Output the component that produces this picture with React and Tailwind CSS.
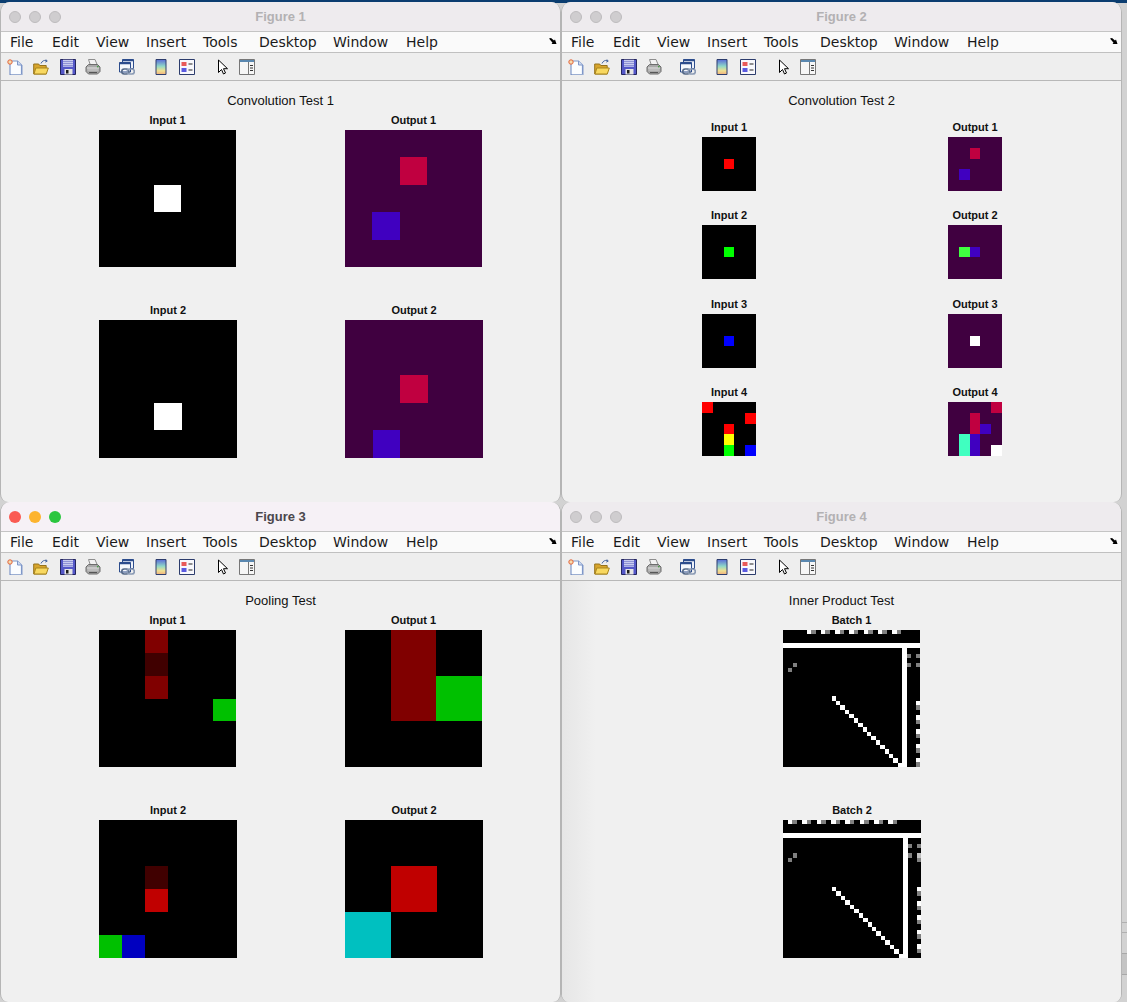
const menus = [
  ['File', 'w-[42px]'], ['Edit', 'w-[44px]'], ['View', 'w-[50px]'], ['Insert', 'w-[57px]'],
  ['Tools', 'w-[56px]'], ['Desktop', 'w-[74px]'], ['Window', 'w-[73px]'], ['Help', 'w-[40px]'],
];

const P = '#400040';
const CR = '#c00040';
const BL = '#4000c0';

// cells are [col, row, colour]
function Img({ n, bg = '#000', cells = [] }) {
  return (
    <svg viewBox={`0 0 ${n} ${n}`} className="block w-full h-full" preserveAspectRatio="none">
      <rect width={n} height={n} fill={bg} />
      {cells.map(([x, y, c, w = 1, h = 1], i) => (
        <rect key={i} x={x} y={y} width={w} height={h} fill={c} shapeRendering="crispEdges" />
      ))}
    </svg>
  );
}

function Axes({ title, size, ...img }) {
  return (
    <div style={{ width: size }}>
      <div className="h-[14px] mb-[3px] text-[11px] leading-[14px] font-bold text-center text-[#111] whitespace-nowrap">{title}</div>
      <div style={{ width: size, height: size }}><Img {...img} /></div>
    </div>
  );
}

function ToolIcons() {
  return (
    <>
      {/* new */}
      <svg width="16" height="16" viewBox="0 0 16 16" className="ml-[6px]">
        <path d="M3 2h7.500l4 4v9.500H3z" fill="#fbfdff" stroke="#7f97c8" strokeWidth="1.200" />
        <path d="M10.500 2v4h4" fill="#cfdcf2" stroke="#7f97c8" />
        <path d="M15.500 6v10H4" fill="none" stroke="#b8c4dc" />
        <circle cx="3" cy="3" r="2.200" fill="#f5dcb0" stroke="#e2643a" />
      </svg>
      {/* open */}
      <svg width="16" height="16" viewBox="0 0 16 16" className="ml-[10px]">
        <path d="M.7 5h5l1 1.500h6.500v8.500H.7z" fill="#d8a52c" stroke="#94721c" />
        <path d="M1 15l1.800-6h12.500l-2 6z" fill="#f8d860" stroke="#a8851f" />
        <path d="M8 4.500c1-2.500 3-3.500 5.500-3M13 .5l1.200 1.700-2 .9" fill="none" stroke="#4a68a0" />
      </svg>
      {/* save */}
      <svg width="16" height="16" viewBox="0 0 16 16" className="ml-[11px]">
        <path d="M.5 .5h15v15H.5z" fill="#5457c8" stroke="#23255f" />
        <path d="M3 .8h10v7H3z" fill="#c9ccf0" />
        <path d="M3 2.500h10M3 4.500h10M3 6.500h10" stroke="#8f93d6" />
        <path d="M4.500 10h8v5.500h-8z" fill="#e6e6e6" />
        <path d="M6 11h2.500v3.500H6z" fill="#1c1c1c" />
      </svg>
      {/* print */}
      <svg width="16" height="16" viewBox="0 0 16 16" className="ml-[9px]">
        <path d="M3.500 .5h6.500l2.500 6H5.500z" fill="#f2f2f2" stroke="#8e8e8e" />
        <path d="M1 8l2.500-2.500h9L15 8v4.500L12.500 15h-9L1 12.500z" fill="#a8a8a8" stroke="#6c6c6c" />
        <path d="M2 9h12" stroke="#e8e8e8" />
        <path d="M2.500 11h11" stroke="#cfcfcf" />
        <path d="M4 13.500h8" stroke="#555" />
        <circle cx="12.800" cy="7.600" r=".9" fill="#4a9a4a" />
      </svg>
      {/* link */}
      <svg width="16" height="16" viewBox="0 0 16 16" className="ml-[18px]">
        <path d="M3.500 .5h11v9h-11z" fill="#eef2fa" stroke="#2c4c8c" />
        <path d="M3.500 .5h11v1.800h-11z" fill="#2c4c8c" />
        <path d="M.5 3.500h11v9.500H.5z" fill="#f6f8fc" stroke="#2c4c8c" />
        <path d="M.5 3.500h11v1.800H.5z" fill="#2c4c8c" />
        <rect x="2.800" y="10" width="7" height="5" rx="2.400" fill="none" stroke="#566a88" strokeWidth="1.600" />
        <rect x="8.300" y="10" width="7" height="5" rx="2.400" fill="none" stroke="#8a9ab4" strokeWidth="1.600" />
      </svg>
      {/* colorbar */}
      <svg width="16" height="16" viewBox="0 0 16 16" className="ml-[18px]">
        <defs>
          <linearGradient id="cb" x1="0" y1="0" x2="0" y2="1">
            <stop offset="0" stopColor="#5a6ad8" />
            <stop offset=".45" stopColor="#8fd8c8" />
            <stop offset=".75" stopColor="#f0e090" />
            <stop offset="1" stopColor="#f0b080" />
          </linearGradient>
        </defs>
        <path d="M3 .5h10v15H3z" fill="url(#cb)" stroke="#2c3c6c" />
      </svg>
      {/* legend */}
      <svg width="16" height="16" viewBox="0 0 16 16" className="ml-[10px]">
        <path d="M.5 .5h15v15H.5z" fill="#f8f8fc" stroke="#2c3c6c" />
        <path d="M2.500 3h5v4h-5z" fill="#e85a5a" />
        <path d="M2.500 9h5v4h-5z" fill="#5a5ae0" />
        <path d="M9.500 5h4M9.500 11h4" stroke="#222" />
      </svg>
      {/* cursor */}
      <svg width="16" height="16" viewBox="0 0 16 16" className="ml-[20px]">
        <path d="M3.500 1v12.500l3-3 2 4.500 2-1-2-4.300h4z" fill="#fff" stroke="#000" />
      </svg>
      {/* plot browser */}
      <svg width="16" height="16" viewBox="0 0 16 16" className="ml-[8px]">
        <path d="M.5 .5h15v15H.5z" fill="#f6f6f6" stroke="#777" />
        <path d="M1 1h14v2H1z" fill="#5a88b0" />
        <path d="M9.500 3v12" stroke="#777" />
        <path d="M11 6.500h3M11 9h3M11 11.500h3" stroke="#333" />
      </svg>
    </>
  );
}

function Figure({ n, title, heading, active, className, plots, grid }) {
  return (
    <div className={`absolute w-[561px] h-[500px] rounded-t-[10px] rounded-b-[8px] overflow-hidden border-l border-r border-[#b5b5b5] flex flex-col bg-[#f0f0f0] ${className}`}>
      <div className={`h-[30px] shrink-0 flex items-center relative border-b border-[#c4c4c4] ${active ? 'bg-[#f6f1f6]' : 'bg-[#eeebee]'}`}>
        <div className="flex gap-2 pl-[8px]">
          <span className={`w-3 h-3 rounded-full ${active ? 'bg-[#fa5a52]' : 'bg-[#cfcdcf] border border-[#bdbbbd]'}`} />
          <span className={`w-3 h-3 rounded-full ${active ? 'bg-[#fdb42e]' : 'bg-[#cfcdcf] border border-[#bdbbbd]'}`} />
          <span className={`w-3 h-3 rounded-full ${active ? 'bg-[#2bc63f]' : 'bg-[#cfcdcf] border border-[#bdbbbd]'}`} />
        </div>
        <div className={`absolute inset-x-0 text-center text-[13px] font-bold ${active ? 'text-[#4b474c]' : 'text-[#b3b1b3]'}`}>{title}</div>
      </div>
      <div className="h-[21px] shrink-0 flex items-center pl-[9px] bg-[#fafafa] border-b border-[#c0c0c0] font-['DejaVu_Sans',sans-serif] text-[14px] text-[#1a1a1a] relative">
        {menus.map(([m, w]) => <span key={m} className={w}>{m}</span>)}
        <svg width="8" height="7" viewBox="0 0 8 7" className="absolute left-[548px] top-[6px]">
          <path d="M0 .5l2-.5 3 2.500L6 1.500 7.500 6H2.500l1-1.200z" fill="#000" />
        </svg>
      </div>
      <div className="h-[28px] shrink-0 flex items-center bg-[#eeeeee] border-b border-[#b8b8b8]">
        <ToolIcons />
      </div>
      <div className={`flex-1 pt-[12px] ${n === 4 ? 'bg-gradient-to-r from-[#e6e6e6] to-[#f0f0f0] to-[6%]' : ''}`}>
        <div className="h-[16px] mb-[4px] text-[13px] leading-[16px] text-center text-[#111]">{heading}</div>
        <div className={grid}>
          {plots.map((p) => <Axes key={p.title} {...p} />)}
        </div>
      </div>
    </div>
  );
}

const fig1 = [
  { title: 'Input 1', size: 137, n: 5, cells: [[2, 2, '#fff']] },
  { title: 'Output 1', size: 137, n: 5, bg: P, cells: [[2, 1, CR], [1, 3, BL]] },
  { title: 'Input 2', size: 138, n: 5, cells: [[2, 3, '#fff']] },
  { title: 'Output 2', size: 138, n: 5, bg: P, cells: [[2, 2, CR], [1, 4, BL]] },
];

const fig2 = [
  { title: 'Input 1', size: 54, n: 5, cells: [[2, 2, '#f00']] },
  { title: 'Output 1', size: 54, n: 5, bg: P, cells: [[2, 1, CR], [1, 3, BL]] },
  { title: 'Input 2', size: 54, n: 5, cells: [[2, 2, '#0f0']] },
  { title: 'Output 2', size: 54, n: 5, bg: P, cells: [[1, 2, '#40ff40'], [2, 2, BL]] },
  { title: 'Input 3', size: 54, n: 5, cells: [[2, 2, '#00f']] },
  { title: 'Output 3', size: 54, n: 5, bg: P, cells: [[2, 2, '#fff']] },
  { title: 'Input 4', size: 54, n: 5, cells: [[0, 0, '#f00'], [4, 1, '#f00'], [2, 2, '#f00'], [2, 3, '#ff0'], [2, 4, '#0f0'], [4, 4, '#00f']] },
  { title: 'Output 4', size: 54, n: 5, bg: P, cells: [[4, 0, CR], [2, 1, CR], [2, 2, CR], [3, 2, BL], [1, 3, '#40ffc0'], [1, 4, '#40ffc0'], [2, 3, BL], [2, 4, BL], [4, 4, '#fff']] },
];

const fig3 = [
  { title: 'Input 1', size: 137, n: 6, cells: [[2, 0, '#800000'], [2, 1, '#400000'], [2, 2, '#800000'], [5, 3, '#00c000']] },
  { title: 'Output 1', size: 137, n: 3, cells: [[1, 0, '#800000'], [1, 1, '#800000'], [2, 1, '#00c000']] },
  { title: 'Input 2', size: 138, n: 6, cells: [[2, 2, '#400000'], [2, 3, '#c00000'], [0, 5, '#00c000'], [1, 5, '#0000c0']] },
  { title: 'Output 2', size: 138, n: 3, cells: [[1, 1, '#c00000'], [0, 2, '#00c0c0']] },
];

const G = '#808080';
const W = '#fff';
const STEP = 3.224;

// 31 cell tiled weight image
function batch(topStart, topCount, sideStart, light) {
  const cells = [
    [0, 3, W, 31, 1], [27, 3, W, 1, 28], [26, 30, W, 1, 1],
    [28, 5.35, G], [30, 5.35, G], [28, 7.45, G], [30, 7.45, light], [2.2, 7.45, G], [1.13, 8.5, G],
  ];
  if (light !== G) cells.push([30, 8.5, G]);
  for (let k = 0; k < topCount; k++) {
    const x = topStart + k * STEP;
    cells.push([x, 0, W], [x + 1, 0, G]);
  }
  for (let k = 0; k < 5; k++) {
    const y = sideStart + k * STEP;
    cells.push([30, y, W], [30, y + 1, G]);
  }
  for (let c = 11; c < 26; c++) cells.push([c, c + 4, W]);
  return cells;
}

const fig4 = [
  { title: 'Batch 1', size: 137, n: 31, cells: batch(5.36, 7, 16.06, G) },
  { title: 'Batch 2', size: 138, n: 31, cells: batch(1.13, 8, 15, '#c0c0c0') },
];

export default function App() {
  return (
    <div className="relative w-[1127px] h-[1002px] overflow-hidden bg-[#d2d2d2] font-['Liberation_Sans',sans-serif]">
      <div className="h-[3px] bg-[#0b3d70]" />
      <div className="absolute left-[1122px] top-[922px] w-[5px] h-[11px] border-y border-[#b0b0b0]" />
      <div className="absolute left-[1122px] top-[953px] w-[5px] h-[22px] bg-[#c4c4c4] border-y border-[#a8a8a8]" />

      <Figure n={1} title="Figure 1" heading="Convolution Test 1" className="left-0 top-[2px]" plots={fig1} grid="grid grid-cols-[137px_137px] gap-x-[109px] gap-y-[36px] pl-[98px]" />
      <Figure n={2} title="Figure 2" heading="Convolution Test 2" className="left-[561px] top-[2px]" plots={fig2} grid="grid grid-cols-[54px_54px] gap-x-[192px] gap-y-[17.33px] pl-[140px] pt-[7px]" />
      <Figure n={3} title="Figure 3" heading="Pooling Test" active className="left-0 top-[502px]" plots={fig3} grid="grid grid-cols-[137px_137px] gap-x-[109px] gap-y-[36px] pl-[98px]" />
      <Figure n={4} title="Figure 4" heading="Inner Product Test" className="left-[561px] top-[502px]" plots={fig4} grid="flex flex-col gap-y-[36px] pl-[221px]" />
    </div>
  );
}
